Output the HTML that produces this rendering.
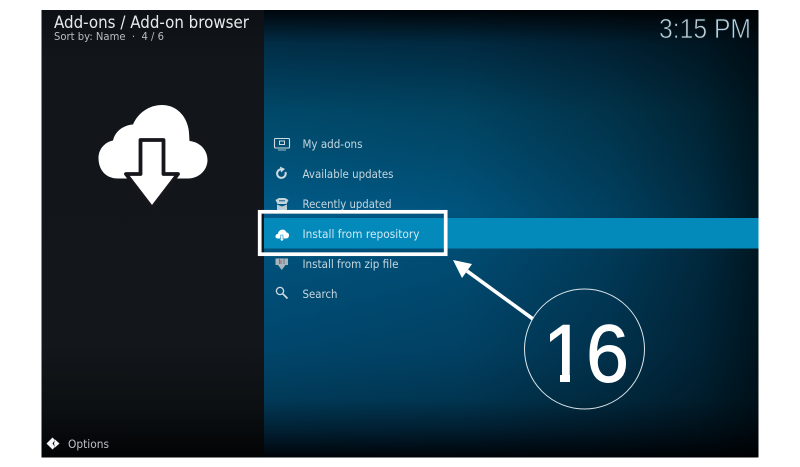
<!DOCTYPE html>
<html><head><meta charset="utf-8">
<style>
html,body{margin:0;padding:0;background:#fff;width:800px;height:467px;overflow:hidden}
svg{display:block}
text{font-family:"DejaVu Sans","Liberation Sans",sans-serif}
</style></head>
<body>
<svg width="800" height="467" viewBox="0 0 800 467" xmlns="http://www.w3.org/2000/svg">
<defs>
<linearGradient id="bg" gradientUnits="userSpaceOnUse" x1="0" y1="10" x2="0" y2="457">
<stop offset="0" stop-color="#00060b"/>
<stop offset="0.03" stop-color="#011522"/>
<stop offset="0.075" stop-color="#012d46"/>
<stop offset="0.225" stop-color="#014868"/>
<stop offset="0.45" stop-color="#015b88"/>
<stop offset="0.54" stop-color="#01527c"/>
<stop offset="0.76" stop-color="#01466c"/>
<stop offset="0.87" stop-color="#013a58"/>
<stop offset="0.94" stop-color="#012033"/>
<stop offset="1" stop-color="#00040a"/>
</linearGradient>
<linearGradient id="side" gradientUnits="userSpaceOnUse" x1="264" y1="0" x2="758" y2="0">
<stop offset="0" stop-color="#000" stop-opacity="0"/>
<stop offset="0.4" stop-color="#000" stop-opacity="0.08"/>
<stop offset="0.7" stop-color="#000" stop-opacity="0.3"/>
<stop offset="0.88" stop-color="#000" stop-opacity="0.5"/>
<stop offset="1" stop-color="#000" stop-opacity="0.72"/>
</linearGradient>
<linearGradient id="panel" x1="0" y1="0" x2="0" y2="1">
<stop offset="0" stop-color="#0d1115"/>
<stop offset="0.12" stop-color="#12161a"/>
<stop offset="0.75" stop-color="#13171b"/>
<stop offset="0.9" stop-color="#0b0f12"/>
<stop offset="1" stop-color="#020304"/>
</linearGradient>
<filter id="s" x="-5%" y="-20%" width="110%" height="140%"><feGaussianBlur stdDeviation="0.35"/></filter>
<filter id="s2" x="-5%" y="-5%" width="110%" height="110%"><feGaussianBlur stdDeviation="0.3"/></filter>
<clipPath id="nofoot"><polygon points="540,310 640,310 640,390 583,390 583,373 570,373 570,390 560,390 560,373 540,373"/></clipPath>
</defs>

<rect x="41.500" y="10" width="717" height="447.500" rx="1.500" fill="url(#bg)"/>
<rect x="264" y="10" width="494.500" height="447.500" fill="url(#side)"/>
<rect x="41.500" y="10" width="222.500" height="447.500" fill="url(#panel)"/>

<!-- selected row -->
<rect x="264" y="218" width="494.500" height="30.500" fill="#038abb"/>

<!-- header -->
<g filter="url(#s)">
<text x="54" y="28" font-size="16.500" fill="#e6eaec" textLength="195" lengthAdjust="spacingAndGlyphs">Add-ons / Add-on browser</text>
<text x="54" y="40" font-size="11" fill="#b9bec1" textLength="110" lengthAdjust="spacingAndGlyphs" xml:space="preserve">Sort by: Name  ·  4 / 6</text>
</g>
<text x="659" y="38" font-size="28" fill="#c6d0d6" stroke="#03202e" stroke-width="0.800" style='font-family:"Liberation Sans",sans-serif' textLength="92" lengthAdjust="spacingAndGlyphs">3:15 PM</text>

<!-- big cloud icon -->
<g filter="url(#s2)">
<path d="M118 178.500 C105 178.500 98.500 169 98.500 158 C98.500 149 105 142 113 140.500 C115 131 124 125 133 124.500 C138 113 149 105 162 105 C177 105 188 117 189 133 L189.500 141 C200 142 207.500 150 207.500 160 C207.500 170 199 178.500 188 178.500 Z" fill="#fff"/>
<path d="M140.500 140 H163.500 V174 H178 L152 208 L126 174 H140.500 Z" fill="#fff" stroke="#13171b" stroke-width="3.800" stroke-linejoin="round"/>

<!-- menu text -->
<g font-size="11.500" fill="#c6d7df">
<text x="302.500" y="148" textLength="60" lengthAdjust="spacingAndGlyphs">My add-ons</text>
<text x="302.500" y="178" textLength="91" lengthAdjust="spacingAndGlyphs">Available updates</text>
<text x="302.500" y="208" textLength="89" lengthAdjust="spacingAndGlyphs">Recently updated</text>
<text x="302.500" y="238" textLength="117" lengthAdjust="spacingAndGlyphs" fill="#cfe9f4">Install from repository</text>
<text x="302.500" y="268" textLength="96" lengthAdjust="spacingAndGlyphs">Install from zip file</text>
<text x="302.500" y="298" textLength="35" lengthAdjust="spacingAndGlyphs">Search</text>
</g>

<!-- menu icons -->
<g fill="none" stroke="#cfdbe1">
<rect x="274.500" y="138.500" width="15" height="9.500" rx="1" stroke-width="1.100"/>
<rect x="279.500" y="141" width="5" height="3.500" stroke-width="1"/>
<path d="M278 150 H286" stroke-width="0.800"/>
<path d="M285.400 172 A4.300 4.300 0 1 1 281 169.300" stroke-width="2"/>
</g>
<path d="M280 166.500 L285 169 L281 172.500 Z" fill="#cfdbe1"/>
<path d="M275.500 200 L279 198 H285 L288.500 200 L286.500 204 H277.500 Z" fill="#c6d5dc"/>
<path d="M277 204.500 L282 206.500 L287 204.500 V210 H277 Z" fill="#b9cbd4"/>
<path d="M279 200.800 H285" stroke="#0a5a80" stroke-width="1"/>
<path d="M277.500 238.500 C274.500 238.500 275 234 278 233.800 C278.500 229 285 228 286.500 232.500 C290 232.500 290 238.500 286 238.500 Z" fill="#fff"/>
<path d="M280.800 235 H283 V239 H284.500 L281.900 241.500 L279.300 239 H280.800 Z" fill="#fff" stroke="#038abb" stroke-width="0.600"/>
<path d="M275.500 258.500 H288 V265 H285.500 L281.700 270 L278 265 H275.500 Z" fill="#aab6bd"/>
<path d="M279.500 259 V264 M284 259 V264" stroke="#6a7a88" stroke-width="1"/>
<path d="M281 260 V264" stroke="#a77a85" stroke-width="1.500"/>
<circle cx="280" cy="291" r="3.600" fill="none" stroke="#cfdbe1" stroke-width="1.300"/>
<path d="M282.700 293.700 L287.500 298.500" stroke="#cfdbe1" stroke-width="1.700"/>

<!-- options -->
<path d="M52.500 437.500 L46.500 443.500 L52.500 449.500 L55 447 L52.500 443.500 L55 440 Z" fill="#f6f6f6"/>
<path d="M55 439.500 L59.500 443.500 L55 447.500 L54 443.500 Z" fill="#f6f6f6"/>
<text x="68" y="448" font-size="11.500" fill="#bcc1c4" textLength="41" lengthAdjust="spacingAndGlyphs">Options</text>
</g>

<!-- highlight box -->
<rect x="259.700" y="211.800" width="186" height="42.400" fill="none" stroke="#fff" stroke-width="3.700"/>

<!-- arrow -->
<path d="M533 319 L467 271" stroke="#fff" stroke-width="3.600" fill="none"/>
<path d="M453 260 L472 264 L462 278 Z" fill="#fff"/>

<!-- circle 16 -->
<circle cx="584.500" cy="349" r="60" fill="none" stroke="#dbe6ea" stroke-width="1"/>
<text x="543" y="381.500" font-size="82" fill="#fff" stroke="#fff" stroke-width="0.900" clip-path="url(#nofoot)" style='font-family:"Liberation Sans",sans-serif' textLength="86" lengthAdjust="spacingAndGlyphs">16</text>
</svg>
</body></html>
